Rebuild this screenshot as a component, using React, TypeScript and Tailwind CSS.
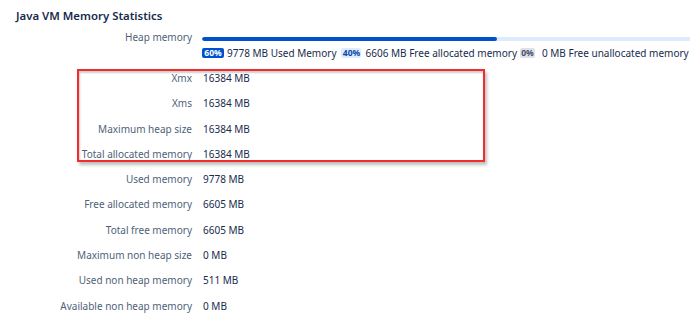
const rows = [
  { label: 'Xmx', value: '16384 MB' },
  { label: 'Xms', value: '16384 MB' },
  { label: 'Maximum heap size', value: '16384 MB' },
  { label: 'Total allocated memory', value: '16384 MB' },
  { label: 'Used memory', value: '9778 MB' },
  { label: 'Free allocated memory', value: '6605 MB' },
  { label: 'Total free memory', value: '6605 MB' },
  { label: 'Maximum non heap size', value: '0 MB' },
  { label: 'Used non heap memory', value: '511 MB' },
  { label: 'Available non heap memory', value: '0 MB' },
];

function Badge({ children, tone }: { children: string; tone: 'blue' | 'light' | 'gray' }) {
  const cls =
    tone === 'blue'
      ? 'bg-[#0052cc] text-white w-[22px]'
      : tone === 'light'
        ? 'bg-[#deebff] text-[#0747a6] w-[20px]'
        : 'bg-[#dfe1e6] text-[#42526e] w-[15px]';
  return (
    <span className={`inline-flex h-[10px] items-center justify-center rounded-[2px] text-[8.5px] font-bold leading-none ${cls}`}>
      {children}
    </span>
  );
}

export default function App() {
  return (
    <div className="relative h-[327px] w-[690px] overflow-hidden bg-white font-['Noto_Sans',sans-serif] text-[10px] text-[#172b4d]">
      <h2 className="pl-4 pt-[7px] text-[11.4px] font-semibold leading-[18px] text-[#172b4d]">Java VM Memory Statistics</h2>

      <div className="mt-[4px] flex">
        <div className="w-[192px] shrink-0 text-right leading-4 text-[#505f79]">Heap memory</div>
        <div className="ml-[10px] flex flex-col">
          <div className="mt-[8px] h-1 w-[492px] overflow-hidden rounded-full bg-[#deebff]">
            <div className="h-full rounded-full bg-[#0052cc]" style={{ width: '60%' }} />
          </div>
          <div className="mt-1 flex items-center whitespace-nowrap leading-4">
            <Badge tone="blue">60%</Badge>
            <span className="ml-[3px] mr-[5px]">9778 MB Used Memory</span>
            <Badge tone="light">40%</Badge>
            <span className="ml-[4px] mr-[3px]">6606 MB Free allocated memory</span>
            <Badge tone="gray">0%</Badge>
            <span className="ml-[7px]">0 MB Free unallocated memory</span>
          </div>
        </div>
      </div>

      <div className="mt-[4.7px] flex flex-col">
        {rows.map((row) => (
          <div key={row.label} className="flex h-[25.33px] items-center">
            <div className="w-[192px] shrink-0 text-right text-[#505f79]">{row.label}</div>
            <div className="ml-[11px]">{row.value}</div>
          </div>
        ))}
      </div>

      <div className="pointer-events-none absolute left-[77px] top-[69px] h-[93px] w-[408px] border-2 border-[#f42b2b] shadow-[2px_3px_3px_rgba(0,0,0,0.25),inset_1px_2px_2px_rgba(0,0,0,0.2)]" />
    </div>
  );
}
